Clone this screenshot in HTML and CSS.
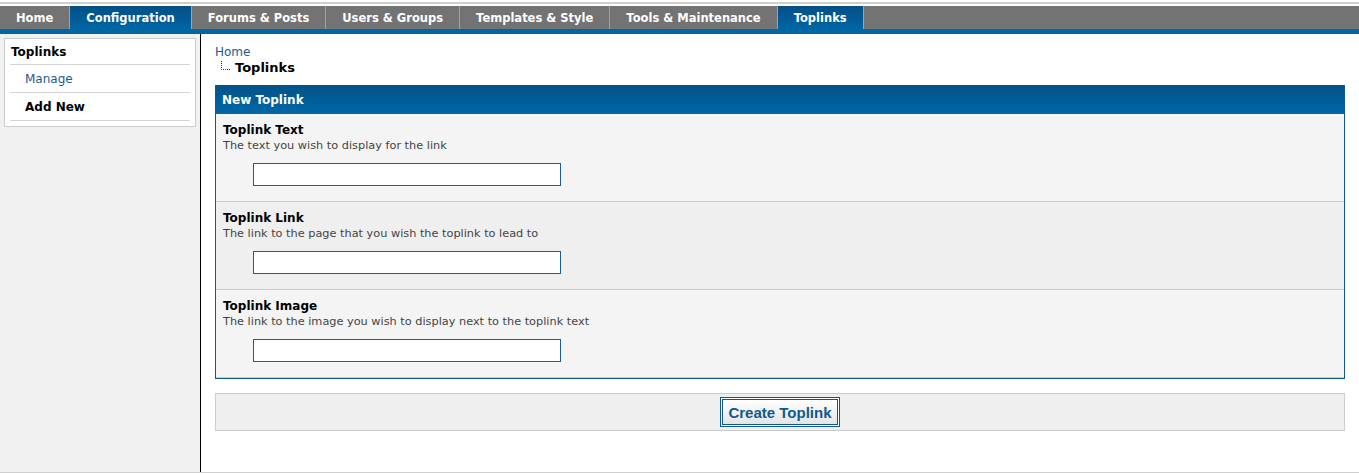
FILE: index.html
```html
<!DOCTYPE html>
<html>
<head>
<meta charset="utf-8">
<title>Toplinks</title>
<link rel="stylesheet" href="styles.css">
</head>
<body>
<div class="topline"></div>
<nav class="menu">
  <a class="tab" href="#">Home</a>
  <a class="tab active" href="#">Configuration</a>
  <a class="tab" href="#">Forums &amp; Posts</a>
  <a class="tab" href="#">Users &amp; Groups</a>
  <a class="tab" href="#">Templates &amp; Style</a>
  <a class="tab" href="#">Tools &amp; Maintenance</a>
  <a class="tab active" href="#">Toplinks</a>
</nav>
<div class="main">
  <aside class="sidebar">
    <div class="sidebox">
      <div class="side-title">Toplinks</div>
      <a class="side-item" href="#">Manage</a>
      <a class="side-item current" href="#">Add New</a>
    </div>
  </aside>
  <section class="content">
    <div class="crumbs">
      <a class="crumb-home" href="#">Home</a>
      <div class="crumb-current">
        <svg class="tree" width="12" height="12" viewBox="0 0 12 12"><path d="M0.5 0 V8.5 H9" fill="none" stroke="#333" stroke-width="1" stroke-dasharray="1 1"/></svg>
        <span>Toplinks</span>
      </div>
    </div>
    <div class="panel">
      <div class="panel-head">New Toplink</div>
      <div class="row">
        <div class="label">Toplink Text</div>
        <div class="desc">The text you wish to display for the link</div>
        <div class="field"><input class="text-input" type="text"></div>
      </div>
      <div class="row alt">
        <div class="label">Toplink Link</div>
        <div class="desc">The link to the page that you wish the toplink to lead to</div>
        <div class="field"><input class="text-input" type="text"></div>
      </div>
      <div class="row last">
        <div class="label">Toplink Image</div>
        <div class="desc">The link to the image you wish to display next to the toplink text</div>
        <div class="field"><input class="text-input" type="text"></div>
      </div>
    </div>
    <div class="submit-box">
      <button class="submit" type="button">Create Toplink</button>
    </div>
  </section>
</div>
</body>
</html>
```
FILE: styles.css
```css
html, body {
  margin: 0;
  padding: 0;
  background: #fff;
}
body {
  font-family: Verdana, "DejaVu Sans", sans-serif;
  font-size: 12px;
  color: #000;
}
.topline {
  height: 2px;
  margin-top: 2px;
  margin-bottom: 2px;
  background: #cfcfcf;
}
.menu {
  display: flex;
  height: 23px;
  background: #737373;
  border-bottom: 5px solid #0066a4;
}
.tab {
  display: flex;
  align-items: center;
  padding: 0 16px;
  height: 23px;
  border-right: 1px solid #a3a3a3;
  color: #fff;
  font-weight: bold;
  font-size: 11.5px;
  text-decoration: none;
  white-space: nowrap;
}
.tab.active {
  background: linear-gradient(#034f86, #0066a4);
}
.main {
  display: flex;
  height: 438px;
  border-bottom: 1px solid #cfcfcf;
}
.sidebar {
  flex: none;
  width: 201px;
  box-sizing: border-box;
  background: #f1f1f1;
  border-right: 1px solid #000;
  padding-top: 4px;
}
.sidebox {
  margin: 0 4px;
  background: #fff;
  border: 1px solid #cccccc;
  padding: 0 5px 5px;
}
.side-title {
  font-weight: bold;
  line-height: 16px;
  padding: 5px 1px 4px;
  border-bottom: 1px solid #d4d4d4;
}
.side-item {
  display: block;
  line-height: 16px;
  padding: 6px 15px 5px;
  border-bottom: 1px solid #d4d4d4;
  color: #1c5b8d;
  text-decoration: none;
  font-size: 12px;
}
.side-item.current {
  color: #000;
  font-weight: bold;
}
.content {
  flex: 1;
  padding: 10px 14px 0 14px;
}
.crumbs {
  margin-bottom: 9px;
}
.crumb-home {
  display: block;
  line-height: 16px;
  color: #1c5b8d;
  text-decoration: none;
  font-size: 12px;
}
.crumb-current {
  display: flex;
  align-items: flex-end;
  height: 16px;
  padding-left: 6px;
  font-weight: bold;
  font-size: 13px;
  line-height: 16px;
}
.tree {
  margin: 0 2px 3px 0;
  flex: none;
}
.panel {
  border: 1px solid #0f5a8c;
  border-top: 0;
}
.panel-head {
  height: 29px;
  line-height: 30px;
  padding: 0 6px;
  background: linear-gradient(#03528a, #0067a6);
  color: #fff;
  font-weight: bold;
  font-size: 12px;
}
.row {
  background: #f4f4f4;
  padding: 8px 7px 15px;
  border-bottom: 1px solid #cccccc;
}
.row.alt {
  background: #efefef;
}
.label {
  font-weight: bold;
  font-size: 12px;
  line-height: 16px;
}
.desc {
  font-size: 11.3px;
  line-height: 15px;
  color: #444;
}
.field {
  margin-top: 10px;
  padding-left: 30px;
  display: flex;
}
.text-input {
  width: 308px;
  height: 23px;
  box-sizing: border-box;
  border: 1px solid #1a5f93;
  background: #fff;
  margin: 0;
  padding: 2px 4px;
  font-family: inherit;
  font-size: 12px;
}
.submit-box {
  margin-top: 14px;
  height: 36px;
  background: #efefef;
  border: 1px solid #cccccc;
  display: flex;
  align-items: center;
  justify-content: center;
}
.submit {
  width: 116px;
  height: 26px;
  border: 1px solid #0f5a8c;
  box-shadow: 0 0 0 1px #fff, 0 0 0 2px #0f5a8c;
  background: linear-gradient(#ffffff, #e4e4e4);
  color: #0f5a8c;
  font-family: "Liberation Sans", Arial, sans-serif;
  font-weight: bold;
  font-size: 15px;
  padding: 0;
  margin: 0;
  cursor: pointer;
}
```
